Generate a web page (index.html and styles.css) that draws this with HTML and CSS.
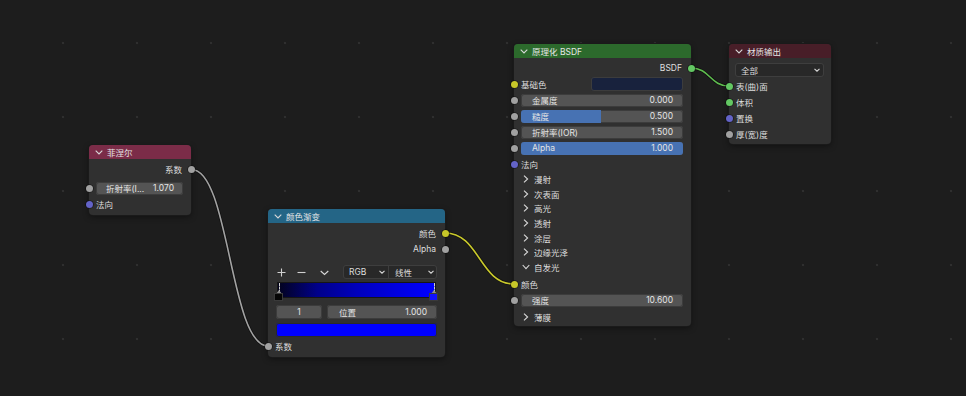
FILE: index.html
```html
<!DOCTYPE html>
<html lang="zh">
<head>
<meta charset="utf-8">
<title>Node Editor</title>
<link rel="stylesheet" href="styles.css">
</head>
<body>
<div class="canvas">
  <svg class="wires" width="966" height="396" viewBox="0 0 966 396">
    <path class="wire-shadow" d="M191.5 169.5 C229.5 169.5 230 346 268 346"/>
    <path class="wire gray" d="M191.5 169.5 C229.5 169.5 230 346 268 346"/>
    <path class="wire-shadow" d="M445 233 C479.5 233 479.5 284 514 284"/>
    <path class="wire yellow" d="M445 233 C479.5 233 479.5 284 514 284"/>
    <path class="wire-shadow" d="M691 68 C710 68 710 86 729 86"/>
    <path class="wire green" d="M691 68 C710 68 710 86 729 86"/>
  </svg>

  <!-- Fresnel -->
  <div class="node fresnel">
    <div class="head head-fresnel">
      <svg class="hchev" width="8" height="5" viewBox="0 0 8 5"><polyline points="0.7,0.7 4,4 7.3,0.7"/></svg>
      <span>菲涅尔</span>
    </div>
    <div class="body">
      <div class="row out"><span>系数</span><i class="sock r gray"></i></div>
      <div class="row frow"><i class="sock l gray"></i><div class="field"><span>折射率(I...</span><span>1.070</span></div></div>
      <div class="row"><i class="sock l blue"></i><span>法向</span></div>
    </div>
  </div>

  <!-- Color Ramp -->
  <div class="node ramp">
    <div class="head head-ramp">
      <svg class="hchev" width="8" height="5" viewBox="0 0 8 5"><polyline points="0.7,0.7 4,4 7.3,0.7"/></svg>
      <span>颜色渐变</span>
    </div>
    <div class="body">
      <div class="row out"><span>颜色</span><i class="sock r yellow"></i></div>
      <div class="row out"><span>Alpha</span><i class="sock r gray"></i></div>
      <div class="tools">
        <div class="tbtns">
          <svg width="9" height="9" viewBox="0 0 9 9"><path d="M4.5 0.5V8.5M0.5 4.5H8.5"/></svg>
          <svg width="9" height="9" viewBox="0 0 9 9"><path d="M0.5 4.5H8.5"/></svg>
          <svg width="9" height="9" viewBox="0 0 9 9"><polyline points="0.7,3 4.5,6.5 8.3,3"/></svg>
        </div>
        <div class="drops">
          <div class="drop d-rgb"><span>RGB</span><svg width="6" height="4" viewBox="0 0 6 4"><polyline points="0.5,0.8 3,3.2 5.5,0.8"/></svg></div>
          <div class="drop d-lin"><span>线性</span><svg width="6" height="4" viewBox="0 0 6 4"><polyline points="0.5,0.8 3,3.2 5.5,0.8"/></svg></div>
        </div>
      </div>
      <div class="rampbar">
        <div class="grad"></div>
        <div class="stop s-left"><i class="dash"></i><i class="tri"></i><i class="sq"></i></div>
        <div class="stop s-right"><i class="dash"></i><i class="tri"></i><i class="sq"></i></div>
      </div>
      <div class="stoprow">
        <div class="field idx"><span>1</span></div>
        <div class="field pos"><span>位置</span><span>1.000</span></div>
      </div>
      <div class="swatch"></div>
      <div class="row"><i class="sock l gray"></i><span>系数</span></div>
    </div>
  </div>

  <!-- Principled BSDF -->
  <div class="node bsdf">
    <div class="head head-bsdf">
      <svg class="hchev" width="8" height="5" viewBox="0 0 8 5"><polyline points="0.7,0.7 4,4 7.3,0.7"/></svg>
      <span>原理化 BSDF</span>
    </div>
    <div class="body">
      <div class="row out"><span>BSDF</span><i class="sock r green"></i></div>
      <div class="row"><i class="sock l yellow"></i><span class="grow">基础色</span><div class="basecol"></div></div>
      <div class="row"><i class="sock l gray"></i><div class="field"><span>金属度</span><span>0.000</span></div></div>
      <div class="row"><i class="sock l gray"></i><div class="field"><div class="fill" style="width:49.5%"></div><span>糙度</span><span>0.500</span></div></div>
      <div class="row"><i class="sock l gray"></i><div class="field"><span>折射率(IOR)</span><span>1.500</span></div></div>
      <div class="row"><i class="sock l gray"></i><div class="field"><div class="fill" style="width:100%"></div><span>Alpha</span><span>1.000</span></div></div>
      <div class="row"><i class="sock l blue"></i><span>法向</span></div>
      <div class="panel"><svg class="pchev" width="6" height="8" viewBox="0 0 6 8"><polyline points="1,0.7 4.6,4 1,7.3"/></svg><span>漫射</span></div>
      <div class="panel"><svg class="pchev" width="6" height="8" viewBox="0 0 6 8"><polyline points="1,0.7 4.6,4 1,7.3"/></svg><span>次表面</span></div>
      <div class="panel"><svg class="pchev" width="6" height="8" viewBox="0 0 6 8"><polyline points="1,0.7 4.6,4 1,7.3"/></svg><span>高光</span></div>
      <div class="panel"><svg class="pchev" width="6" height="8" viewBox="0 0 6 8"><polyline points="1,0.7 4.6,4 1,7.3"/></svg><span>透射</span></div>
      <div class="panel"><svg class="pchev" width="6" height="8" viewBox="0 0 6 8"><polyline points="1,0.7 4.6,4 1,7.3"/></svg><span>涂层</span></div>
      <div class="panel"><svg class="pchev" width="6" height="8" viewBox="0 0 6 8"><polyline points="1,0.7 4.6,4 1,7.3"/></svg><span>边缘光泽</span></div>
      <div class="panel"><svg class="pchev" width="8" height="6" viewBox="0 0 8 6"><polyline points="0.7,1 4,4.6 7.3,1"/></svg><span>自发光</span></div>
      <div class="pbody">
        <div class="row"><i class="sock l yellow"></i><span>颜色</span></div>
        <div class="row"><i class="sock l gray"></i><div class="field"><span>强度</span><span>10.600</span></div></div>
      </div>
      <div class="panel"><svg class="pchev" width="6" height="8" viewBox="0 0 6 8"><polyline points="1,0.7 4.6,4 1,7.3"/></svg><span>薄膜</span></div>
    </div>
  </div>

  <!-- Material Output -->
  <div class="node matout">
    <div class="head head-mat">
      <svg class="hchev" width="8" height="5" viewBox="0 0 8 5"><polyline points="0.7,0.7 4,4 7.3,0.7"/></svg>
      <span>材质输出</span>
    </div>
    <div class="body">
      <div class="droprow"><div class="drop d-all"><span>全部</span><svg width="6" height="4" viewBox="0 0 6 4"><polyline points="0.5,0.8 3,3.2 5.5,0.8"/></svg></div></div>
      <div class="row"><i class="sock l green"></i><span>表(曲)面</span></div>
      <div class="row"><i class="sock l green"></i><span>体积</span></div>
      <div class="row"><i class="sock l blue"></i><span>置换</span></div>
      <div class="row"><i class="sock l gray"></i><span>厚(宽)度</span></div>
    </div>
  </div>
</div>
</body>
</html>
```
FILE: styles.css
```css
html, body {
  margin: 0;
  padding: 0;
}
body {
  width: 966px;
  height: 396px;
  overflow: hidden;
  background-color: #1d1d1d;
  font-family: "Inter", "Noto Sans CJK SC", sans-serif;
  font-size: 8.5px;
  color: #dedede;
}
.canvas {
  position: relative;
  width: 966px;
  height: 396px;
  background-image: radial-gradient(circle at center, #2f2f2f 0, #2f2f2f 1px, transparent 1.6px);
  background-size: 74px 74px;
  background-position: 26px 6px;
}
.wires {
  position: absolute;
  left: 0;
  top: 0;
}
.wire-shadow {
  fill: none;
  stroke: rgba(0, 0, 0, 0.45);
  stroke-width: 3.2;
}
.wire {
  fill: none;
  stroke-width: 1.6;
}
.wire.gray { stroke: #a2a2a2; }
.wire.yellow { stroke: #c9c92c; }
.wire.green { stroke: #5fbd4f; }

.node {
  position: absolute;
  background: #303030;
  border-radius: 4px;
  box-shadow: 0 0 0 1px #1a1a1a, 0 2px 6px rgba(0, 0, 0, 0.45);
}
.fresnel { left: 89px; top: 145px; width: 102px; }
.ramp { left: 268px; top: 209px; width: 177px; }
.bsdf { left: 514px; top: 44px; width: 177px; }
.matout { left: 729px; top: 44px; width: 102px; }

.head {
  height: 14px;
  border-radius: 4px 4px 0 0;
  display: flex;
  align-items: center;
  padding-left: 6px;
  gap: 4px;
  color: #e6e6e6;
}
.head-fresnel { background: #7b2c48; }
.head-ramp { background: #246586; }
.head-bsdf { background: #2c6a2c; }
.head-mat { background: #481e28; }
.hchev polyline, .pchev polyline, .tbtns svg polyline, .drop svg polyline {
  fill: none;
  stroke: #d8d8d8;
  stroke-width: 1.1;
}
.tbtns svg path {
  fill: none;
  stroke: #d0d0d0;
  stroke-width: 1.1;
}

.body {
  padding: 2px 0 3px;
  display: flex;
  flex-direction: column;
}
.row {
  position: relative;
  height: 16px;
  display: flex;
  align-items: center;
  padding: 0 8px 0 7px;
  white-space: nowrap;
}
.row.out { justify-content: flex-end; padding-right: 9px; }
.frow { margin-top: 3px; }
.grow { flex: 1; }

.sock {
  position: absolute;
  top: 50%;
  width: 7px;
  height: 7px;
  margin-top: -3.5px;
  border-radius: 50%;
  box-shadow: 0 0 0 0.6px rgba(0, 0, 0, 0.6);
}
.sock.l { left: -3.5px; }
.sock.r { right: -3.5px; }
.sock.gray { background: #a1a1a1; }
.sock.yellow { background: #c7c729; }
.sock.blue { background: #6363c7; }
.sock.green { background: #63c763; }

.field {
  position: relative;
  flex: 1;
  height: 13px;
  background: #545454;
  border-radius: 3px;
  display: flex;
  align-items: center;
  justify-content: space-between;
  padding: 0 10px 0 11px;
  overflow: hidden;
  color: #e4e4e4;
  box-shadow: inset 0 0 0 1px #3c3c3c;
}
.fresnel .field { padding: 0 9px 0 10px; }
.field span { position: relative; }
.fill {
  position: absolute;
  left: 0;
  top: 0;
  bottom: 0;
  background: #4772b3;
}

.basecol {
  width: 92px;
  height: 14px;
  border-radius: 3px;
  background: #18223d;
  box-shadow: inset 0 0 0 1px #3c3c3c;
}

/* Color ramp */
.tools {
  margin-top: 7px;
  height: 16px;
  display: flex;
  align-items: center;
  justify-content: space-between;
  padding: 0 8px 0 9px;
}
.tbtns {
  display: flex;
  align-items: center;
  gap: 11px;
}
.tbtns svg:last-child { margin-left: 3px; }
.drops {
  display: flex;
  height: 14px;
  border-radius: 3px;
  box-shadow: inset 0 0 0 1px #3e3e3e;
  background: #282828;
}
.drop {
  display: flex;
  align-items: center;
  justify-content: space-between;
  padding: 0 3px 0 6px;
  color: #dcdcdc;
}
.d-rgb { width: 46px; box-sizing: border-box; border-right: 1px solid #3e3e3e; }
.d-lin { width: 48px; box-sizing: border-box; }
.rampbar {
  position: relative;
  margin: 3px 10px 0;
  height: 18px;
}
.grad {
  height: 14px;
  background: linear-gradient(to right, #03031c 0%, #00008a 25%, #0000bc 50%, #0000e0 75%, #0000ff 100%);
  box-shadow: 0 0 0 1px #161616;
}
.stop {
  position: absolute;
  top: 0;
  width: 9px;
  height: 18px;
}
.s-left { left: -3px; }
.s-right { right: -4px; }
.dash {
  position: absolute;
  left: 4px;
  top: 0;
  height: 10px;
  border-left: 1px dashed #cfcfcf;
}
.tri {
  position: absolute;
  left: 1px;
  top: 7px;
  width: 0;
  height: 0;
  border-left: 3.5px solid transparent;
  border-right: 3.5px solid transparent;
  border-bottom: 4px solid #8c8c8c;
}
.sq {
  position: absolute;
  left: 0;
  top: 11px;
  width: 7px;
  height: 6px;
  box-shadow: 0 0 0 1px #3a3a3a;
}
.s-left .sq { background: #050505; }
.s-right .sq { background: #1010ff; }
.stoprow {
  display: flex;
  gap: 5px;
  margin: 4px 8px 0;
  height: 14px;
  align-items: center;
}
.stoprow .field { height: 14px; }
.field.idx { flex: 0 0 46px; justify-content: center; padding: 0; }
.field.pos { flex: 1; padding: 0 10px 0 12px; }
.swatch {
  margin: 4px 8px 0;
  height: 14px;
  border-radius: 3px;
  background: #0000ff;
  box-shadow: inset 0 0 0 1px #2a2a2a;
}
.ramp .swatch + .row { margin-top: 1px; }

/* Panels */
.panel {
  height: 14.6px;
  display: flex;
  align-items: center;
  gap: 4px;
  padding-left: 8px;
}
.panel .pchev { width: 8px; }
.pbody {
  padding: 2px 0;
}
.bsdf .body { padding-bottom: 1px; }

/* Material output */
.droprow {
  padding: 3px 7px 0 6px;
  margin-bottom: 1px;
}
.d-all {
  height: 14px;
  border-radius: 3px;
  background: #282828;
  box-shadow: inset 0 0 0 1px #3e3e3e;
  padding: 0 4px 0 6px;
}
.matout .body { padding-bottom: 2px; }
```
